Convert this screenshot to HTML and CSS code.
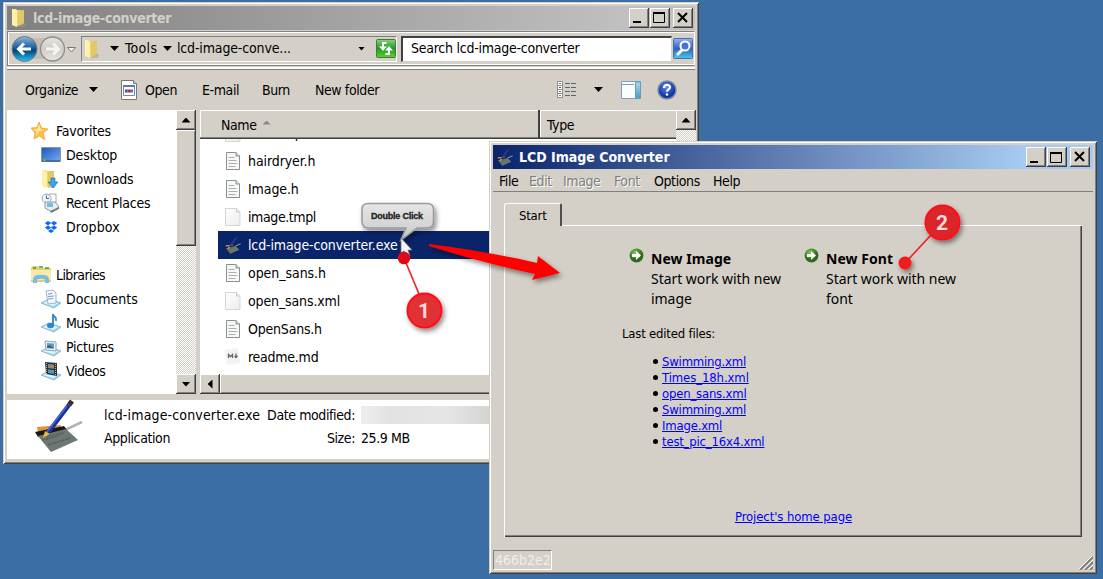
FILE: index.html
```html
<!DOCTYPE html>
<html lang="en">
<head>
<meta charset="utf-8">
<title>lcd-image-converter</title>
<link rel="stylesheet" href="styles.css">
</head>
<body>
<svg class="defs" width="0" height="0">
  <defs>
    <linearGradient id="gold" x1="0" x2="1"><stop offset="0" stop-color="#fff3b0"/><stop offset=".5" stop-color="#ecd277"/><stop offset="1" stop-color="#c9a43c"/></linearGradient>
    <linearGradient id="blueDown" x2="0" y2="1"><stop offset="0" stop-color="#8db8d4"/><stop offset=".45" stop-color="#1a5f9c"/><stop offset=".55" stop-color="#07407e"/><stop offset="1" stop-color="#25c8f4"/></linearGradient>
    <linearGradient id="greyDown" x2="0" y2="1"><stop offset="0" stop-color="#e8e6e2"/><stop offset=".5" stop-color="#cfccc6"/><stop offset="1" stop-color="#e9e7e2"/></linearGradient>
    <linearGradient id="screen" x1="0" y1="0" x2="1" y2="1"><stop offset="0" stop-color="#1f55bb"/><stop offset="1" stop-color="#77acf3"/></linearGradient>
    <linearGradient id="greenDown" x2="0" y2="1"><stop offset="0" stop-color="#8fce84"/><stop offset=".5" stop-color="#1d9d1d"/><stop offset="1" stop-color="#64cd35"/></linearGradient>
    <linearGradient id="findDown" x2="0" y2="1"><stop offset="0" stop-color="#9bb3ec"/><stop offset=".5" stop-color="#2f5fc4"/><stop offset="1" stop-color="#48cde8"/></linearGradient>
    <linearGradient id="paneSide" x2="0" y2="1"><stop offset="0" stop-color="#a9dcea"/><stop offset="1" stop-color="#4f9dc0"/></linearGradient>
    <radialGradient id="go" cx=".4" cy=".3"><stop offset="0" stop-color="#86c95c"/><stop offset="1" stop-color="#2d6a1c"/></radialGradient>
    <radialGradient id="help" cx=".45" cy=".35"><stop offset="0" stop-color="#5a8df0"/><stop offset="1" stop-color="#12349c"/></radialGradient>
    <linearGradient id="pageGrad" x1="0" y1="0" x2="1" y2="1"><stop offset="0" stop-color="#fff"/><stop offset="1" stop-color="#ececec"/></linearGradient>
    <symbol id="folder" viewBox="0 0 16 20"><path d="M7 14l8 1-1 4-7 0z" fill="#9a9890" opacity=".45"/><path d="M1 1h4l1 1h7v14l-7 2-5-1z" fill="url(#gold)"/><path d="M1 1l5 2v16l-5-2z" fill="#fff1a8"/><path d="M7 3l6-1v13l-6 3z" fill="#e3c768"/></symbol>
    <symbol id="page" viewBox="0 0 16 20"><path d="M1.500 1.500h9.500l3.500 3.500v13.500h-13z" fill="#f7f8f8" stroke="#8b8f90"/><path d="M11 1.500v3.500h3.500" fill="#ddd" stroke="#8b8f90"/><path d="M3.500 6.500h6M3.500 9.500h8M3.500 12.500h9M3.500 15.500h7" stroke="#a9adaf"/></symbol>
    <symbol id="blank" viewBox="0 0 16 20"><path d="M.5 1.500h11l3.500 3.500v13.500H.5z" fill="url(#pageGrad)" stroke="#d5d5d5"/><path d="M11.500 1.500v3.500H15" fill="#eee" stroke="#c8c8c8"/></symbol>
    <symbol id="pen" viewBox="0 0 48 54"><path d="M2 28l24-2-1 5-22 3z" fill="#d99542"/><path d="M30 31l17-8" stroke="#b4b4b4" stroke-width="2.500"/><path d="M0 33l29-6 3 4-29 7z" fill="#191919"/><path d="M3 37l28-7 12 11-27 12z" fill="#6c7871"/><path d="M8 41l16-4M13 46l22-7M9 38l20-4" stroke="#535c57" stroke-width="1.500" stroke-dasharray="2 1"/><path d="M12 35L34 6" stroke="#1d2f98" stroke-width="4.500"/><path d="M12 33L32 7" stroke="#4862e4" stroke-width="1.500"/><path d="M8 39l2-7 5 3z" fill="#efb63e"/><path d="M34 6l3-4" stroke="#3b2f32" stroke-width="5"/></symbol>
    <symbol id="tray" viewBox="0 0 20 20"><path d="M0 14l8-4 12 4-7 5z" fill="#a7d5ee" stroke="#6aa9cc" stroke-width=".7"/><path d="M2 14l6-3 9 3-5 3z" fill="#dff4fd"/></symbol>
    <symbol id="go-arrow" viewBox="0 0 15 15"><circle cx="7.500" cy="7.500" r="6.900" fill="url(#go)"/><path d="M3 6h4V3l5 4.500L7 12V9H3z" fill="#fff"/></symbol>
  </defs>
</svg>

<section class="window explorer">
  <header class="titlebar titlebar-inactive">
    <svg class="title-folder" width="18" height="20"><use href="#folder"/></svg>
    <h1 class="title explorer-title">lcd-image-converter</h1>
    <div class="win-buttons">
      <span class="btn"><svg width="18" height="18"><path d="M3 13h8" stroke="#000" stroke-width="2"/></svg></span>
      <span class="btn"><svg width="18" height="18"><path d="M2.500 4.500h11v9h-11z" fill="none" stroke="#000"/><path d="M2 4h12" stroke="#000" stroke-width="2"/></svg></span>
      <span class="btn btn-close"><svg width="18" height="18"><path d="M4 4l9 9M13 4l-9 9" stroke="#000" stroke-width="2"/></svg></span>
    </div>
  </header>

  <nav class="navbar">
    <svg class="travel" width="68" height="28">
      <path d="M14 3h38v21H14z" fill="#c1beb8"/>
      <circle cx="14.500" cy="14" r="12.500" fill="url(#blueDown)" stroke="#707a80"/>
      <path d="M21 14H9M14 8.500L8.500 14l5.500 5.500" fill="none" stroke="#fff" stroke-width="3"/>
      <circle cx="42.500" cy="14" r="12" fill="url(#greyDown)" stroke="#8f8d89" stroke-width="1.300"/>
      <path d="M36 14h12M43 8.500l5.500 5.500-5.500 5.500" fill="none" stroke="#f5f4f1" stroke-width="3"/>
      <path d="M57.500 12.500h8l-4 4.500z" fill="#fff" stroke="#777"/>
    </svg>
    <div class="address">
      <svg width="18" height="20"><use href="#folder"/></svg>
      <i class="caret"></i><span class="crumb tools">Tools</span>
      <i class="caret"></i><span class="crumb leaf">lcd-image-conve...</span>
      <i class="caret small"></i>
      <svg class="refresh" width="20" height="19"><rect x=".5" y=".5" width="19" height="18" rx="1" fill="url(#greenDown)" stroke="#397f37"/><path d="M10.500 4H7v4M9.500 15H13v-4" fill="none" stroke="#fff" stroke-width="2"/><path d="M3 7.500h8L7 12zM9 11.500h8L13 7z" fill="#fff"/></svg>
    </div>
    <div class="search">Search lcd-image-converter</div>
    <svg class="find" width="20" height="21"><rect x=".5" y=".5" width="19" height="20" rx="1" fill="url(#findDown)" stroke="#476bae"/><path d="M9 12l-5 5" stroke="#fff" stroke-width="3"/><circle cx="12" cy="8" r="4.500" fill="#4774cc" stroke="#fff" stroke-width="2"/></svg>
  </nav>

  <div class="toolbar">
    <span class="tool organize">Organize</span><i class="caret"></i>
    <svg class="open-icon" width="17" height="20"><path d="M.5.5h12l3 3v16h-15z" fill="#fff" stroke="#777"/><path d="M12.500.5v3h3" fill="#ddd" stroke="#777"/><path d="M2.500 6.500h11v9h-11z" fill="#fff" stroke="#7386ad"/><path d="M2 6h12" stroke="#5b79b8" stroke-width="2"/><path d="M4 11h2.500" stroke="#284fd0" stroke-width="3"/><path d="M6.500 11H9" stroke="#d02a1f" stroke-width="3"/><path d="M9 11h3" stroke="#4a6bd0" stroke-width="3"/></svg>
    <span class="tool open">Open</span>
    <span class="tool email">E-mail</span>
    <span class="tool burn">Burn</span>
    <span class="tool new-folder">New folder</span>
    <svg class="views" width="20" height="17"><path d="M.5.5h5v16h-5zM.5 4.500h5M.5 8.500h5M.5 12.500h5" fill="#fff" stroke="#8a8f94"/><path d="M8 2.500h5M14 2.500h5M8 6.500h5M14 6.500h5M8 10.500h5M14 10.500h5M8 14.500h5M14 14.500h5" stroke="#5c6670"/><path d="M2 2.500h2" stroke="#35885f"/><path d="M2 6.500h2" stroke="#d22"/><path d="M2 10.500h2" stroke="#26d"/><path d="M2 14.500h2" stroke="#7a2"/></svg>
    <i class="caret"></i>
    <svg class="preview" width="20" height="18"><path d="M.5.5h19v17H.5z" fill="#fafcfe" stroke="#7a9ec4"/><path d="M1 3.500h12" stroke="#7a9ec4"/><path d="M14.500 1h5v16h-5z" fill="url(#paneSide)" stroke="#5d9fbd"/></svg>
    <svg class="help" width="20" height="20"><circle cx="10" cy="10" r="9" fill="url(#help)" stroke="#7d8aa8" stroke-width="1.500"/><path d="M7 8c0-4 6-4 6-.7 0 2-3 2.200-3 4.400" fill="none" stroke="#fff" stroke-width="2.200"/><circle cx="10" cy="14.500" r="1.300" fill="#fff"/></svg>
  </div>

  <div class="panes">
    <aside class="tree">
      <div class="node group"><svg width="18" height="20"><path d="M8 1l2.500 6L17 8l-5 4 2 7-5.500-4L3 18l1-6-4-5 6-.5z" fill="#fbc04d" stroke="#e99a2e" stroke-width=".7"/><path d="M8 3l1.500 5 4 1-5 1-4 5 1-4-3-3 4 0z" fill="#ffe391"/></svg><span class="t1">Favorites</span></div>
      <div class="node"><svg width="20" height="18"><path d="M.5 1.500h19v14H.5z" fill="url(#screen)" stroke="#8796ae"/><path d="M1 15h18" stroke="#24456d"/><circle cx="3.500" cy="14" r="1.500" fill="#51b95d"/></svg><span class="t2">Desktop</span></div>
      <div class="node"><svg width="20" height="20"><use href="#folder" width="16" height="20"/><path d="M10 9h4v4h3l-5 6-5-6h3z" fill="#39a6e2" stroke="#2477b5" stroke-width=".7"/></svg><span class="t3">Downloads</span></div>
      <div class="node"><svg width="20" height="20"><path d="M8 1h7v9H8z" fill="#f8fafb" stroke="#aaa"/><circle cx="5.500" cy="5.500" r="4.500" fill="#e9f3fa" stroke="#9cabb8"/><path d="M5.500 2.500v3H8" fill="none" stroke="#567"/><path d="M4 9h10l4 5-7 5-7-4z" fill="#e8eef1" stroke="#8d979d"/><path d="M6 10h6v4H6z" fill="#79bbdd"/><path d="M9 18l9-4v2l-8 4z" fill="#737c82"/></svg><span class="t4">Recent Places</span></div>
      <div class="node"><svg width="20" height="18"><path d="M7 3l3.200 2L7 7.500 3.800 5zM13 3l3.200 2L13 7.500 9.800 5zM7 7.500l3.200 2L7 12 3.800 9.500zM13 7.500l3.200 2L13 12 9.800 9.500zM10 11l3 2-3 2-3-2z" fill="#0a67ff"/></svg><span class="t5">Dropbox</span></div>
      <div class="node group libraries"><svg width="20" height="20"><path d="M0 3l2-2h5l1 2h12v14H0z" fill="#e8cc6d"/><path d="M0 5h20v10H0z" fill="#faeaa9"/><path d="M2 3h3M8 2h4M14 3h4" stroke="#3a9e4c" stroke-width="1.500"/><path d="M4 18v-4c0-3 12-3 12 0v4" fill="none" stroke="#78bde5" stroke-width="4"/></svg><span class="t6">Libraries</span></div>
      <div class="node"><svg width="20" height="20"><use href="#tray"/><path d="M5 2l7-1 3 3v10l-8 1z" fill="#f1f6fb" stroke="#91a5b9" stroke-width=".8"/><path d="M7 5l4-.5M7 7.500l6-.5M7 10l5-.5" stroke="#7f9bc0"/></svg><span class="t7">Documents</span></div>
      <div class="node"><svg width="20" height="20"><use href="#tray"/><path d="M12 1v11M12 2c2 3 4 2 3 6" fill="none" stroke="#2a82c6" stroke-width="1.800"/><ellipse cx="9.500" cy="12.500" rx="3.500" ry="2.800" fill="#2a87cd"/></svg><span class="t8">Music</span></div>
      <div class="node"><svg width="20" height="20"><use href="#tray"/><path d="M4 4l11 1v9L5 13z" fill="#eaf2f7" stroke="#8ca3b5"/><path d="M6 6l7 .5v5L6 11z" fill="#59a5c0"/><path d="M6 9l3-1 4 3.500L6 11z" fill="#3a6489"/></svg><span class="t9">Pictures</span></div>
      <div class="node"><svg width="20" height="20"><use href="#tray"/><path d="M4 1l12 1v13L5 13z" fill="#2b3338"/><path d="M7 3l6 .5v4L7 7zM7 8.500l6 .5v4l-6-1z" fill="#5397bc"/><path d="M7 6l6-2v3.500L7 7z" fill="#cf783b"/><path d="M5.500 2v11M14.500 3v11" stroke="#b1b6b8" stroke-dasharray="1 1"/></svg><span class="t10">Videos</span></div>
    </aside>
    <div class="vscroll">
      <span class="btn arrow-btn"><i class="caret up"></i></span>
      <span class="btn thumb"></span>
      <span class="track"></span>
      <span class="btn arrow-btn"><i class="caret"></i></span>
    </div>
    <main class="files">
      <div class="columns"><span class="col name-col"><span class="h-name">Name</span><i class="sort"></i></span><span class="col type-col"><span class="h-type">Type</span></span></div>
      <div class="rows">
        <div class="row cut"><svg width="16" height="20"><use href="#blank"/></svg><span>data.tmpl</span></div>
        <div class="row"><svg width="16" height="20"><use href="#page"/></svg><span class="f1">hairdryer.h</span></div>
        <div class="row"><svg width="16" height="20"><use href="#page"/></svg><span class="f2">Image.h</span></div>
        <div class="row"><svg width="16" height="20"><use href="#blank"/></svg><span class="f3">image.tmpl</span></div>
        <div class="row selected"><svg width="16" height="18"><use href="#pen"/></svg><span class="f4">lcd-image-converter.exe</span></div>
        <div class="row"><svg width="16" height="20"><use href="#page"/></svg><span class="f5">open_sans.h</span></div>
        <div class="row"><svg width="16" height="20"><use href="#blank"/></svg><span class="f6">open_sans.xml</span></div>
        <div class="row"><svg width="16" height="20"><use href="#page"/></svg><span class="f7">OpenSans.h</span></div>
        <div class="row"><svg width="16" height="20"><path d="M0 3l13-2 2 15-13 2z" fill="#f2f2f2"/><path d="M3.500 11V7.500l2 2 2-2V11M11 6.500v4M9.500 9l1.500 1.500L12.500 9" fill="none" stroke="#666" stroke-width="1.300"/></svg><span class="f8">readme.md</span></div>
      </div>
      <div class="hscroll"><span class="btn arrow-btn"><i class="caret left"></i></span><span class="btn hthumb"></span></div>
    </main>
    <div class="vscroll list-scroll"><span class="btn arrow-btn"><i class="caret up"></i></span><span class="track"></span></div>
  </div>

  <footer class="details">
    <svg class="app-icon" width="50" height="54"><use href="#pen"/></svg>
    <div class="facts">
      <span class="d1">lcd-image-converter.exe</span><span class="label d2">Date modified:</span><span class="redacted"></span>
      <span class="d3">Application</span><span class="label d4">Size:</span><span class="d5">25.9 MB</span>
    </div>
  </footer>
</section>

<section class="window converter">
  <header class="titlebar titlebar-active">
    <svg class="title-pen" width="16" height="18"><use href="#pen"/></svg>
    <h1 class="title converter-title">LCD Image Converter</h1>
    <div class="win-buttons">
      <span class="btn"><svg width="18" height="18"><path d="M3 14h8" stroke="#000" stroke-width="2"/></svg></span>
      <span class="btn"><svg width="18" height="18"><path d="M2.500 4.500h11v10h-11z" fill="none" stroke="#000"/><path d="M2 5h12" stroke="#000" stroke-width="2"/></svg></span>
      <span class="btn btn-close"><svg width="18" height="18"><path d="M4 4l9 9M13 4l-9 9" stroke="#000" stroke-width="2"/></svg></span>
    </div>
  </header>
  <nav class="menu">
    <span class="m1">File</span><span class="m2 off">Edit</span><span class="m3 off">Image</span><span class="m4 off">Font</span><span class="m5">Options</span><span class="m6">Help</span>
  </nav>
  <div class="tabs"><span class="tab"><span class="start">Start</span></span><span class="tab-rest"></span></div>
  <div class="page">
    <div class="actions">
      <div class="action"><svg width="15" height="15"><use href="#go-arrow"/></svg><div><h2 class="a1">New Image</h2><p>Start work with new image</p></div></div>
      <div class="action"><svg width="15" height="15"><use href="#go-arrow"/></svg><div><h2 class="a2">New Font</h2><p>Start work with new font</p></div></div>
    </div>
    <p class="recent-label">Last edited files:</p>
    <ul class="recent">
      <li><a class="r1">Swimming.xml</a></li>
      <li><a class="r2">Times_18h.xml</a></li>
      <li><a class="r3">open_sans.xml</a></li>
      <li><a class="r1">Swimming.xml</a></li>
      <li><a class="r4">Image.xml</a></li>
      <li><a class="r5">test_pic_16x4.xml</a></li>
    </ul>
    <a class="home">Project's home page</a>
  </div>
  <footer class="status"><span class="rev">466b2e2</span>
    <svg class="grip" width="14" height="14"><path d="M1 14L14 1M6 14l8-8M11 14l3-3" stroke="#808080" stroke-width="2"/><path d="M0 13L13 0M5 13l9-9M10 13l4-4" stroke="#fff"/></svg>
  </footer>
</section>

<svg class="annotations" width="1103" height="579">
  <defs>
    <filter id="drop" x="-30%" y="-30%" width="160%" height="180%"><feDropShadow dx="2" dy="3" stdDeviation="2.500" flood-opacity=".45"/></filter>
    <linearGradient id="bubble" x2="0" y2="1"><stop offset="0" stop-color="#e6e6e6"/><stop offset="1" stop-color="#c9c9c9"/></linearGradient>
  </defs>
  <g filter="url(#drop)"><path d="M368 203.500h59q6.500 0 6.500 6v11.500q0 7-6.500 7h-10L401 240l5-12h-38q-6-.5-6-7V209.500q0-6 6-6z" fill="url(#bubble)" stroke="#9b9b9b" stroke-width="1.500"/></g>
  <text class="bubble-text" x="371" y="219" textLength="52">Double Click</text>
  <path d="M401 238v15l3-2 3 6 3-1-2-6 4 0z" fill="#f3f3f3" stroke="#777" stroke-width=".7"/>
  <path d="M429 244Q485 251 537 263l1-7 22 17-28 7 3-6Q483 263 429 246z" fill="#fe0000" filter="url(#drop)"/>
  <path d="M404 258l15 36" stroke="#ef252b" stroke-width="1.700"/>
  <circle cx="404" cy="258" r="6.300" fill="#dd0b18"/>
  <g filter="url(#drop)"><circle cx="424.500" cy="310.500" r="17" fill="#e03336" stroke="#fe1115" stroke-width="2"/></g>
  <text class="badge" x="424" y="318">1</text>
  <path d="M905 263l26-28" stroke="#ef252b" stroke-width="1.700"/>
  <g filter="url(#drop)"><circle cx="905" cy="263" r="6.500" fill="#f11a1e"/><circle cx="942.500" cy="222.500" r="17" fill="#da282b" stroke="#fe1115" stroke-width="2"/></g>
  <text class="badge" x="942" y="230">2</text>
</svg>
</body>
</html>
```
FILE: styles.css
```css
* { box-sizing: border-box; }
body { margin: 0; width: 1103px; height: 579px; overflow: hidden; position: relative; background: #3a6ea5; font: 14px/20px "DejaVu Sans Condensed", "DejaVu Sans", sans-serif; font-stretch: condensed; color: #000; letter-spacing: -.4px; }
h1, h2, p, ul { margin: 0; padding: 0; }
svg { display: block; flex: none; }
span { white-space: nowrap; }
.defs, .annotations { position: absolute; left: 0; top: 0; }

/* Windows on the desktop */
.window { position: absolute; padding: 4px; display: flex; flex-direction: column; background: #d4d0c8; box-shadow: inset 1px 1px #d4d0c8, inset -1px -1px #404040, inset 2px 2px #fff, inset -2px -2px #808080; }
.explorer { left: 3px; top: 2px; width: 696px; height: 462px; }
.converter { left: 489px; top: 141px; width: 608px; height: 433px; }
.titlebar { height: 24px; flex: none; display: flex; align-items: center; }
.titlebar-inactive { background: linear-gradient(90deg, #808080, #c0c0c0 620px); padding-left: 3px; }
.titlebar-active { background: linear-gradient(90deg, #0a246a, #a6caf0 530px); padding-left: 4px; }
.title { font-size: 14px; line-height: 24px; font-weight: bold; color: #fff; }
.title-folder { margin-right: 5px; }
.title-pen { margin-right: 6px; }
.explorer-title { color: #d4d0c8; letter-spacing: -.28px; }
.converter-title { letter-spacing: -.02px; }
.win-buttons { margin-left: auto; display: flex; padding-right: 2px; }
.titlebar-active .win-buttons { padding-right: 3px; }
.win-buttons .btn { width: 20px; height: 20px; padding: 1px; }
.win-buttons .btn + .btn { margin-left: 1px; }
.win-buttons .btn-close.btn { margin-left: 3px; }
.btn { display: block; background: #d4d0c8; box-shadow: inset -1px -1px #404040, inset 1px 1px #fff, inset -2px -2px #808080; }
.caret { display: block; flex: none; width: 9px; height: 5px; background: #000; clip-path: polygon(0 0, 100% 0, 50% 100%); }
.caret.up { clip-path: polygon(50% 0, 100% 100%, 0 100%); }
.caret.left { width: 5px; height: 9px; clip-path: polygon(0 50%, 100% 0, 100% 100%); }
.caret.small { width: 7px; height: 4px; margin: 0 11px 0 auto; }

/* Explorer */
.navbar { height: 35px; margin-top: 1px; flex: none; display: flex; align-items: center; padding-left: 2px; border: 1px solid #808080; border-right-color: #fff; box-shadow: inset 1px 1px #fff, inset 0 -1px #fff; }
.address { display: flex; align-items: center; flex: none; width: 316px; height: 26px; margin-left: 3px; border: 1px solid #808080; border-right-color: #fff; border-bottom-color: #fff; padding-left: 1px; }
.address svg:first-child { margin-right: 9px; }
.crumb { margin-top: -2px; }
.tools { width: 33px; margin-left: 6px; margin-right: 5px; letter-spacing: .3px; }
.leaf { margin-left: 5px; letter-spacing: -.15px; }
.search { width: 271px; height: 26px; margin-left: 4px; background: #fff; border: 2px solid #404040; border-right: 1px solid #d4d0c8; border-bottom: 1px solid #d4d0c8; padding-left: 8px; line-height: 21px; letter-spacing: -.25px; }
.find { margin-left: 1px; }
.toolbar { height: 43px; flex: none; margin-top: 1px; border-top: 2px solid #fff; box-shadow: inset 0 1px #808080; display: flex; align-items: center; padding-left: 18px; }
.organize { width: 64px; }
.open-icon { margin: 0 7px 0 23px; }
.open { width: 57px; }
.email { width: 60px; }
.burn { width: 53px; }
.new-folder { width: 242px; }
.views { margin-right: 17px; }
.preview { margin: 0 16px 0 18px; }
.panes { height: 284px; flex: none; display: flex; margin-right: -1px; }
.tree { width: 169px; flex: none; background: #fff; padding-top: 9px; }
.node { height: 24px; display: flex; align-items: center; gap: 5px; padding-left: 34px; }
.node span { line-height: 24px; }
.node.group { padding-left: 24px; gap: 7px; }
.node.libraries { margin-top: 24px; gap: 5px; }
.t1, .t3 { letter-spacing: -.2px; }
.t2 { letter-spacing: -.1px; }
.t4 { letter-spacing: -.25px; }
.t5 { letter-spacing: .1px; }
.t6, .t8 { letter-spacing: -.6px; }
.t7 { letter-spacing: 0; }
.t9 { letter-spacing: -.25px; }
.vscroll { width: 20px; flex: none; display: flex; flex-direction: column; }
.arrow-btn { width: 20px; height: 20px; flex: none; display: flex; align-items: center; justify-content: center; }
.thumb { height: 116px; }
.track { flex: 1; background: conic-gradient(#d4d0c8 25%, #fff 0 50%, #d4d0c8 0 75%, #fff 0) 0 0 / 2px 2px; }
.files { width: 476px; flex: none; margin-left: 4px; background: #fff; }
.columns { height: 29px; display: flex; background: #d4d0c8; }
.col { display: flex; align-items: center; height: 29px; box-shadow: inset 0 -1px #404040, inset 0 -2px #808080, inset 1px 1px #fff; }
.name-col { width: 340px; padding-left: 21px; border-right: 2px solid #404040; }
.type-col { width: 136px; padding-left: 7px; }
.sort { width: 8px; height: 4px; margin: -4px 0 0 6px; background: #888; clip-path: polygon(50% 0, 100% 100%, 0 100%); }
.rows { height: 235px; display: flex; flex-direction: column; overflow: hidden; padding-left: 18px; }
.row { height: 28px; flex: none; display: flex; align-items: center; padding-left: 7px; gap: 7px; }
.row.cut { margin-top: -20px; }
.row.selected { background: #0a246a; color: #fff; }
.f1, .f2 { letter-spacing: -.1px; }
.f4, .f6 { letter-spacing: -.13px; }
.f5 { letter-spacing: -.05px; }
.f7 { letter-spacing: -.2px; }
.f8 { letter-spacing: -.25px; }
.hscroll { height: 20px; display: flex; background: #d4d0c8; }
.hthumb { flex: 1; }
.details { height: 59px; margin-top: 6px; background: #fff; display: flex; }
.app-icon { margin: -1px 20px 0 27px; }
.facts { display: grid; grid-template-columns: 151px 94px 300px; grid-template-rows: 23px 23px; align-items: center; padding-top: 3px; column-gap: 6px; height: 49px; }
.d1 { letter-spacing: .15px; }
.label { text-align: right; }
.redacted { height: 18px; background: linear-gradient(90deg, #eee, #e2e2e2 30px, #e4e6e8 85px, #d7d4d3 128px); }

/* Converter */
.menu { height: 23px; flex: none; border-bottom: 1px solid #808080; display: flex; line-height: 24px; padding-left: 6px; }
.off { color: #808080; text-shadow: 1px 1px #fff; }
.m1 { width: 30px; } .m2 { width: 34px; } .m3 { width: 51px; } .m4 { width: 40px; } .m5 { width: 59px; }
.tabs { height: 23px; flex: none; margin: 11px 11px 0; display: flex; }
.tab { width: 58px; height: 23px; border: 1px solid #fff; border-right: 2px solid #505050; border-bottom: 0; border-radius: 3px 2px 0 0; padding: 0 0 0 14px; line-height: 23px; font-size: 13px; letter-spacing: -.2px; }
.tab-rest { flex: 1; border-bottom: 1px solid #fff; }
.page { margin: 0 11px; height: 311px; flex: none; border-left: 1px solid #fff; box-shadow: inset -1px -1px #404040, inset -2px -2px #808080; font-family: "Noto Sans", sans-serif; font-stretch: normal; letter-spacing: -.04px; display: flex; flex-direction: column; }
.actions { display: flex; padding: 23px 0 0 124px; height: 98px; }
.action { width: 175px; display: flex; gap: 7px; }
.action svg { margin-top: -1px; }
.action p { width: 140px; }
.action h2 { font-size: 14px; line-height: 20px; letter-spacing: .05px; }
.recent-label, .recent, .home, .status { font-family: "DejaVu Sans Condensed", "DejaVu Sans", sans-serif; font-stretch: condensed; }
.recent-label { font-size: 13px; margin-left: 117px; letter-spacing: -.2px; line-height: 20px; }
.recent { list-style: none; margin: 10px 0 0 150px; font-size: 13px; line-height: 16px; letter-spacing: -.2px; }
.recent li { display: flex; align-items: center; gap: 4px; height: 16px; }
.recent li::before { content: ""; width: 5px; height: 5px; margin: -2px 0 0 -2px; border-radius: 50%; background: #000; }
.r2 { letter-spacing: -.1px; }
a { color: #00f; text-decoration: underline; }
.home { align-self: center; margin-top: 57px; font-size: 13px; letter-spacing: -.1px; }
.status { display: flex; margin-top: 13px; height: 20px; align-items: flex-end; letter-spacing: 0; }
.rev { border: 1px solid #808080; border-right-color: #fff; border-bottom-color: #fff; height: 20px; width: 59px; color: #f0eeea; line-height: 18px; padding-left: 1px; }
.grip { margin-left: auto; }

/* Callouts */
.badge { font: bold 21px Roboto, "Liberation Sans", sans-serif; fill: #f8dada; text-anchor: middle; letter-spacing: 0; }
.bubble-text { font: bold 9px "Liberation Sans", Arial, sans-serif; fill: #222; stroke: #222; stroke-width: .3px; letter-spacing: 0; }
```
